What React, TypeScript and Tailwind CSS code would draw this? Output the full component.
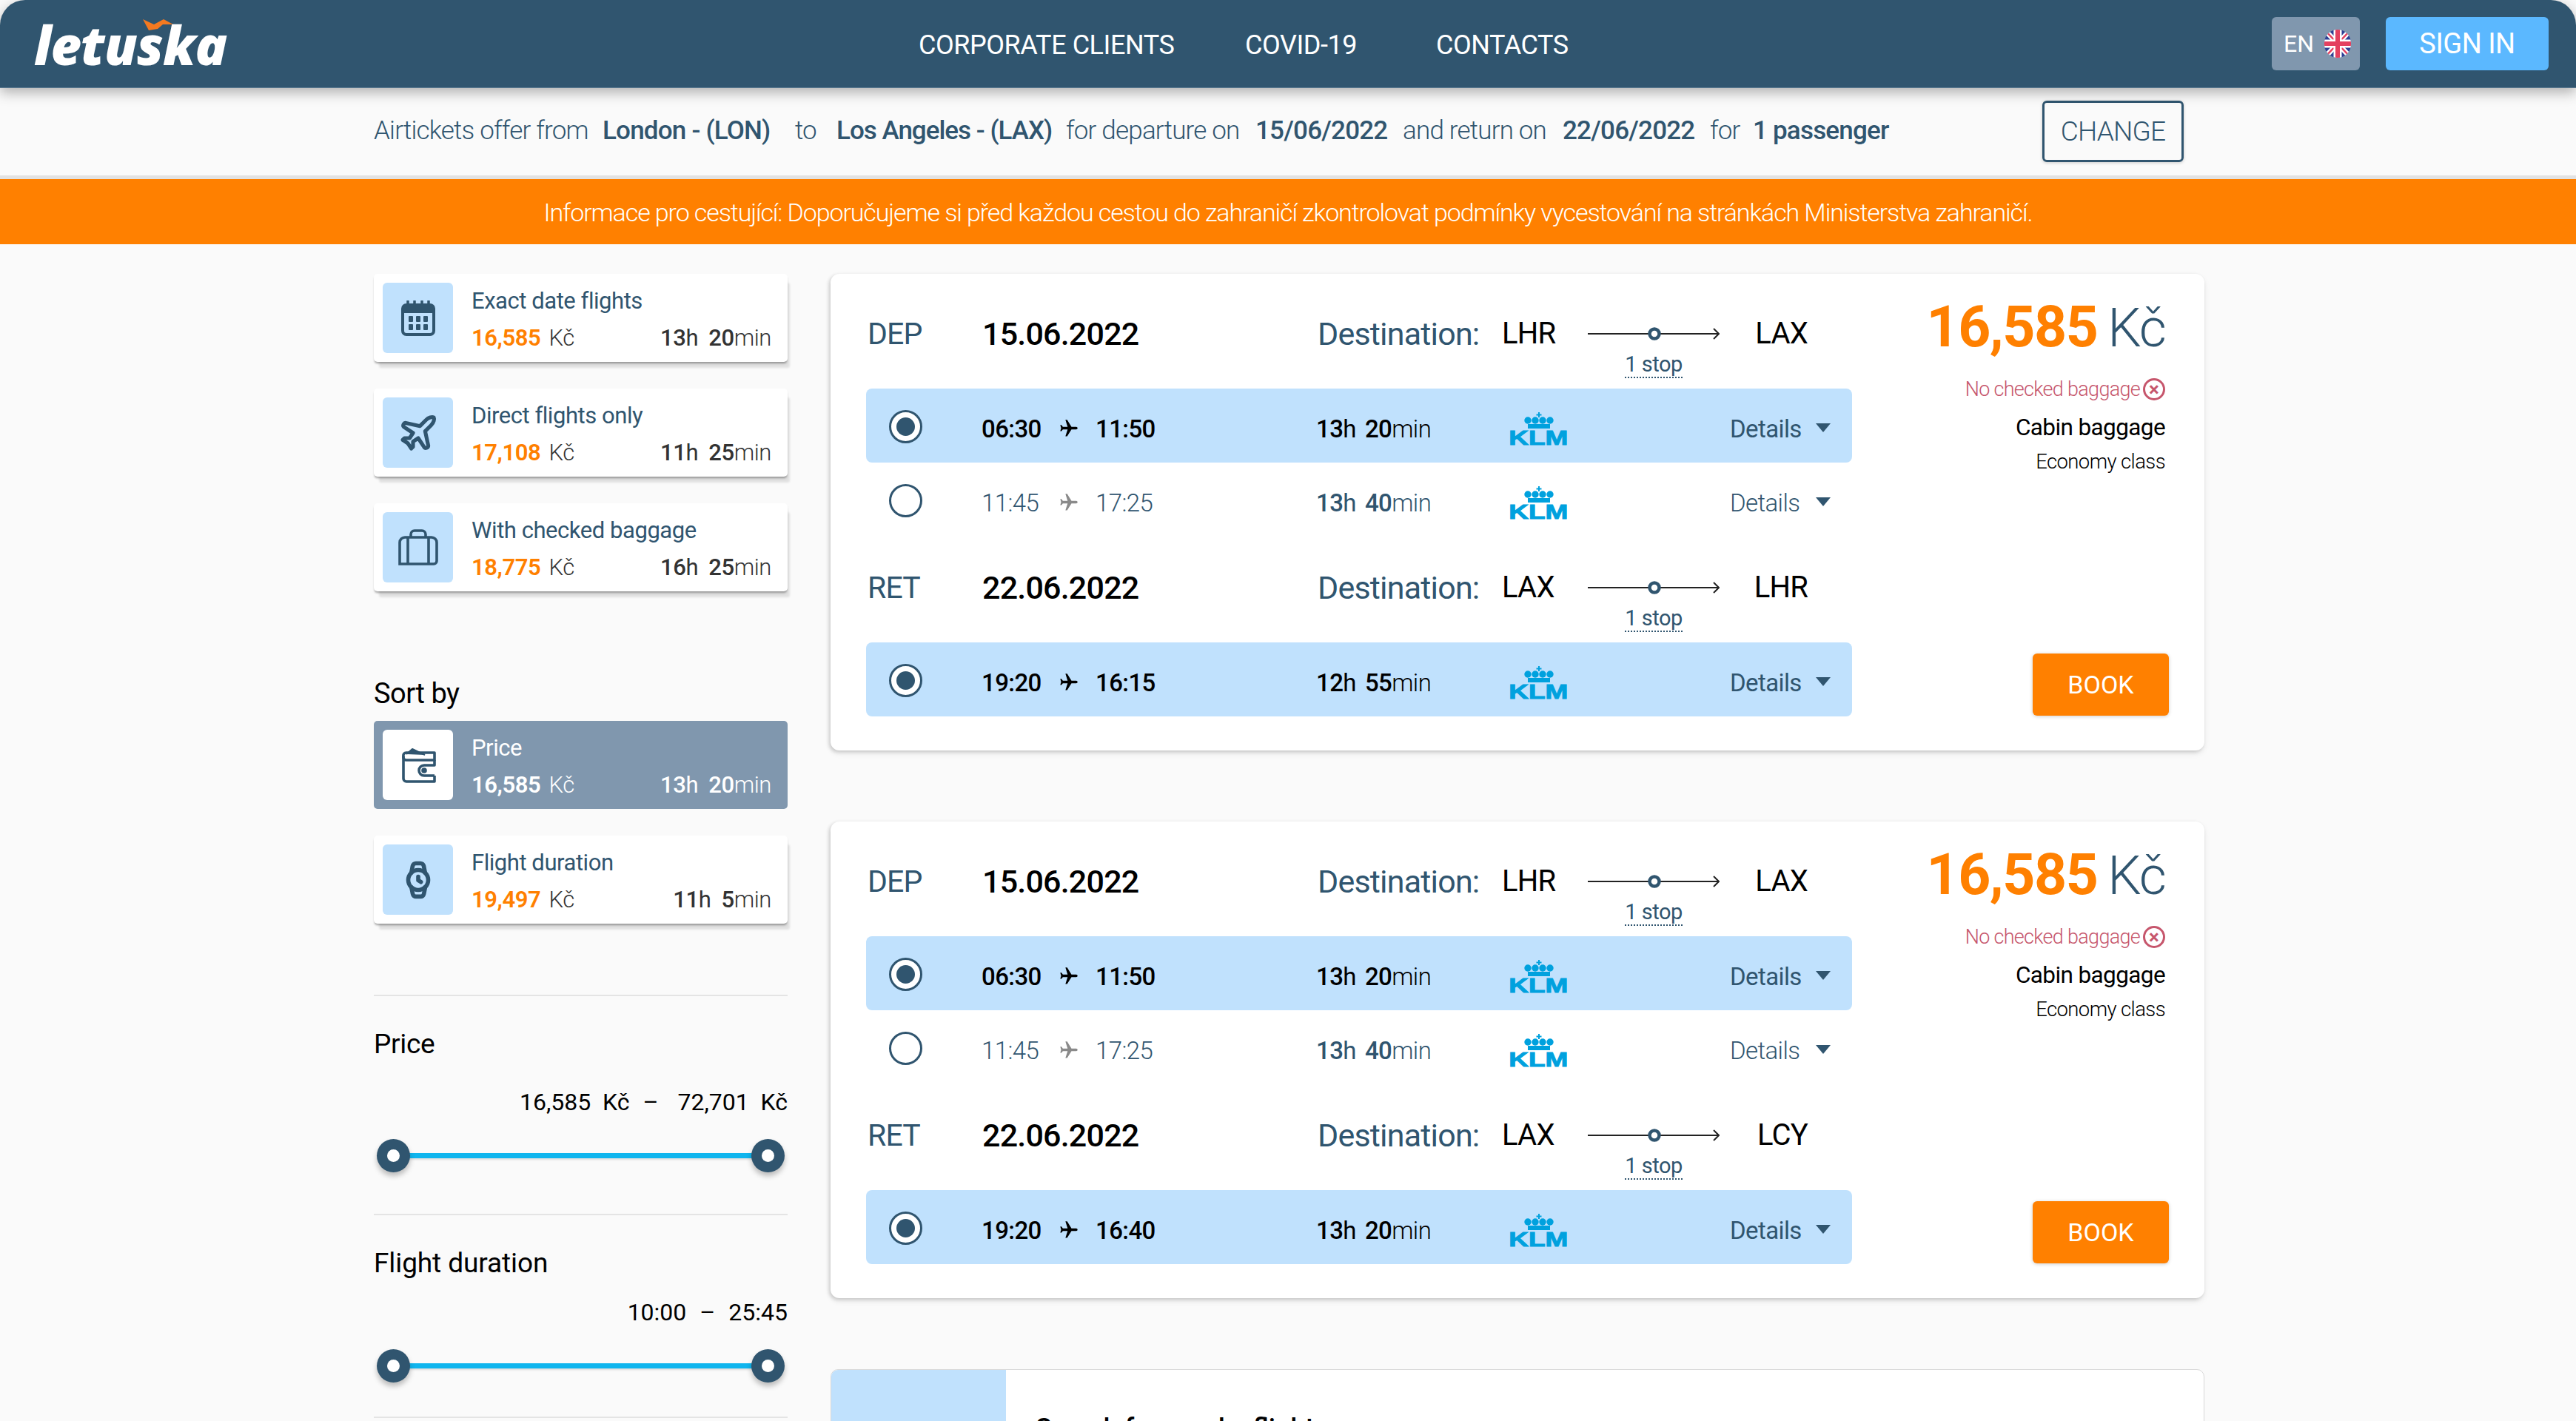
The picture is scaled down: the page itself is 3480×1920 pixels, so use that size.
import React from 'react';
import { Plane, Watch } from 'lucide-react';

interface FlightRowData {
  dep: string;
  arr: string;
  hours: string;
  mins: string;
  selected?: boolean;
}

interface OfferData {
  retTo: string;
  retArr: string;
  retHours: string;
  retMins: string;
}

const CalendarIcon = () => (
  <svg width="46" height="48" viewBox="0 0 46 48" fill="none">
    <rect x="2" y="6" width="42" height="40" rx="5" stroke="#30556f" strokeWidth="4" />
    <rect x="2" y="6" width="42" height="9" fill="#30556f" />
    <path d="M9 1v9M18 1v9M28 1v9M37 1v9" stroke="#30556f" strokeWidth="3.5" strokeLinecap="round" />
    <path d="M2 16h42" stroke="#30556f" strokeWidth="2" />
    <g fill="#30556f">
      <rect x="10" y="21" width="6" height="8" rx="1" />
      <rect x="20" y="21" width="6" height="8" rx="1" />
      <rect x="30" y="21" width="6" height="8" rx="1" />
      <rect x="10" y="32" width="6" height="8" rx="1" />
      <rect x="20" y="32" width="6" height="8" rx="1" />
      <rect x="30" y="32" width="6" height="8" rx="1" />
    </g>
  </svg>
);

const BagIcon = () => (
  <svg width="54" height="50" viewBox="0 0 54 50" fill="none" stroke="#30556f" strokeWidth="3.6">
    <path d="M17 11V7a5 5 0 0 1 5-5h10a5 5 0 0 1 5 5v4" />
    <path d="M2 47V18a7 7 0 0 1 7-7h36a7 7 0 0 1 7 7v25a4 4 0 0 1-4 4z" />
    <path d="M13 11v36M41 11v36" />
  </svg>
);

const WalletIcon = () => (
  <svg width="48" height="48" viewBox="0 0 48 48" fill="none" stroke="#30556f" strokeWidth="3.6" strokeLinejoin="round">
    <path d="M4 12v30a4 4 0 0 0 4 4h38v-8" />
    <path d="M4 12a4 4 0 0 1 4-5h38v10H8a4 4 0 0 1-4-5z" />
    <path d="M8 9 L16 2 L33 10" fill="#30556f" strokeWidth="2" />
    <path d="M46 17v7H32a6 6 0 0 0 0 14h14" />
    <circle cx="32" cy="31" r="2" fill="#30556f" />
  </svg>
);

const TripPlane = ({ color }: { color: string }) => (
  <svg width="28" height="28" viewBox="0 0 24 24" fill={color} className="rotate-90">
    <path d="M21 16v-2l-8-5V3.500c0-.83-.67-1.500-1.500-1.500S10 2.670 10 3.500V9l-8 5v2l8-2.500V19l-2 1.500V22l3.500-1 3.500 1v-1.500L13 19v-5.500l8 2.500z" />
  </svg>
);

const UkFlag = () => (
  <svg width="36" height="38" viewBox="0 0 36 38" className="rounded-full">
    <rect width="36" height="38" fill="#2d3f94" />
    <path d="M0 0L36 38M36 0L0 38" stroke="#fff" strokeWidth="7" />
    <path d="M0 0L36 38M36 0L0 38" stroke="#e4405f" strokeWidth="2.5" />
    <path d="M18 0v38M0 19h36" stroke="#fff" strokeWidth="11" />
    <path d="M18 0v38M0 19h36" stroke="#e4405f" strokeWidth="6" />
  </svg>
);

const KlmLogo = () => (
  <div className="flex w-[81px] flex-col items-center">
    <svg width="40" height="23" viewBox="0 0 40 23" fill="#00a1de">
      <path d="M19 0h2v2.500h2.500v2H21V7h-2V4.500h-2.500v-2H19z" />
      <circle cx="5" cy="11" r="4.700" />
      <circle cx="15" cy="11" r="4.700" />
      <circle cx="25" cy="11" r="4.700" />
      <circle cx="35" cy="11" r="4.700" />
      <rect x="5" y="16" width="30" height="6" />
    </svg>
    <span className="h-[23px] origin-center scale-x-[1.32] [font-family:'Liberation_Sans',sans-serif] text-[28px] leading-[23px] font-bold text-[#00a1de] [-webkit-text-stroke:1px_#00a1de]">
      KLM
    </span>
  </div>
);

const Radio = ({ checked }: { checked?: boolean }) => (
  <span className={`flex h-[45px] w-[45px] items-center justify-center rounded-full border-[3px] border-[#30556f] ${checked ? 'bg-white' : 'bg-transparent'}`}>
    {checked && <span className="h-[25px] w-[25px] rounded-full bg-[#30556f]" />}
  </span>
);

const Caret = () => <span className="mt-[-4px] h-0 w-0 border-x-[10px] border-t-[12px] border-x-transparent border-t-[#30556f]" />;

const FlightRow = ({ dep, arr, hours, mins, selected }: FlightRowData) => (
  <div className={`flex h-[100px] items-center rounded-[8px] pt-[10px] pl-[31px] ${selected ? 'bg-[#c0e1fd]' : ''}`}>
    <div className="w-[125px] -translate-y-[4px]">
      <Radio checked={selected} />
    </div>
    <div className={`flex w-[452px] items-center gap-[22px] text-[33px] tracking-[-0.6px] ${selected ? 'font-medium text-black' : 'font-light text-[#30556f]'}`}>
      <span className="w-[82px]">{dep}</span>
      <span className="-translate-y-[1px]">
        <TripPlane color={selected ? '#000' : '#8a8a8a'} />
      </span>
      <span>{arr}</span>
    </div>
    <div className={`w-[260px] text-[33px] tracking-[-0.6px] ${selected ? 'text-black' : 'text-[#30556f]'}`}>
      <span className="font-medium">{hours}</span>h<span className="ml-[12px] font-medium">{mins}</span>
      <span className="font-light">min</span>
    </div>
    <KlmLogo />
    <div className="ml-[218px] flex items-center gap-[19px] text-[#30556f]">
      <span className={`w-[97px] text-[33px] tracking-[-0.6px] ${selected ? 'font-normal' : 'font-light'}`}>Details</span>
      <Caret />
    </div>
  </div>
);

const RouteHeader = ({ kind, date, from, to }: { kind: string; date: string; from: string; to: string }) => (
  <div className="flex h-[143px] pt-[43px] pl-[2px] text-[40px] leading-[52px] tracking-[-0.8px] text-black">
    <span className="w-[155px] text-[41px] text-[#30556f]">{kind}</span>
    <span className="w-[453px] text-[43px] font-medium">{date}</span>
    <span className="w-[249px] text-[43px] text-[#30556f]">Destination:</span>
    <span className="w-[116px]">{from}</span>
    <div className="flex w-[178px] flex-col items-center">
      <svg width="178" height="50" viewBox="0 0 178 50" fill="none" className="mt-[1px]">
        <path d="M0 25h177M170 18l7 7-7 7" stroke="#222" strokeWidth="2" />
        <circle cx="90" cy="25" r="6.500" fill="#fff" stroke="#30556f" strokeWidth="4.500" />
      </svg>
      <span className="border-b-[2px] border-dotted border-[#30556f] text-[29px] leading-[33px] tracking-[-0.5px] text-[#30556f]">1 stop</span>
    </div>
    <span className="w-[119px] text-right">{to}</span>
  </div>
);

const OfferCard = ({ retTo, retArr, retHours, retMins }: OfferData) => (
  <div className="flex h-[644px] rounded-[12px] bg-white pt-[12px] pl-[48px] shadow-[-2px_2px_5px_rgba(0,0,0,0.16),0_4px_8px_rgba(0,0,0,0.08)]">
    <div className="w-[1332px]">
      <RouteHeader kind="DEP" date="15.06.2022" from="LHR" to="LAX" />
      <FlightRow dep="06:30" arr="11:50" hours="13" mins="20" selected />
      <FlightRow dep="11:45" arr="17:25" hours="13" mins="40" />
      <RouteHeader kind="RET" date="22.06.2022" from="LAX" to={retTo} />
      <FlightRow dep="19:20" arr={retArr} hours={retHours} mins={retMins} selected />
    </div>
    <div className="flex w-[423px] flex-col items-end pt-[22px]">
      <div className="flex items-baseline text-[#30556f]">
        <span className="text-[77px] leading-[76px] font-bold tracking-[-1.5px] text-[#ff8000]">16,585</span>
        <span className="ml-[14px] text-[72px] leading-[76px] font-light tracking-[-2px]">Kč</span>
      </div>
      <div className="mt-[26px] flex items-center gap-[4px] text-[27px] leading-[36px] font-light tracking-[-0.7px] text-[#c6566c]">
        No checked baggage
        <span className="flex h-[30px] w-[30px] items-center justify-center rounded-full border-[3px] border-[#c6566c] text-[26px] leading-none font-bold tracking-normal">×</span>
      </div>
      <div className="mt-[14px] text-[31.5px] leading-[40px] tracking-[-0.6px] text-black">Cabin baggage</div>
      <div className="mt-[8px] text-[27.5px] leading-[36px] font-light tracking-[-0.6px] text-black">Economy class</div>
      <button className="mt-auto mr-[-5px] mb-[47px] h-[84px] w-[184px] rounded-[6px] bg-[#ff8000] text-[34px] font-normal text-white shadow-[0_1px_5px_rgba(0,0,0,0.2)]">BOOK</button>
    </div>
  </div>
);

const SideCard = ({
  title,
  price,
  hours,
  mins,
  icon,
  active,
  mt,
}: {
  title: string;
  price: string;
  hours: string;
  mins: string;
  icon: React.ReactNode;
  active?: boolean;
  mt?: string;
}) => (
  <div
    className={`flex h-[119px] items-center rounded-[5px] pl-[12px] pr-[22px] ${mt ?? ''} ${
      active ? 'bg-[#8097ae] text-white' : 'bg-white shadow-[0_3px_3px_-1px_rgba(0,0,0,0.35),5px_10px_3px_-2px_rgba(0,0,0,0.1)]'
    }`}
  >
    <div className={`flex h-[95px] w-[95px] shrink-0 items-center justify-center rounded-[6px] ${active ? 'bg-white' : 'bg-[#c0e1fd]'}`}>{icon}</div>
    <div className="ml-[25px] flex grow flex-col pt-[5px]">
      <div className={`text-[31px] leading-[50px] tracking-[-0.45px] ${active ? 'text-white' : 'text-[#30556f]'}`}>{title}</div>
      <div className="flex justify-between text-[31px] leading-[50px] tracking-[-0.4px]">
        <span>
          <span className={`font-semibold ${active ? '' : 'text-[#ff8000]'}`}>{price}</span>
          <span className={`ml-[11px] font-light ${active ? '' : 'text-[#333]'}`}>Kč</span>
        </span>
        <span className={active ? '' : 'text-[#333]'}>
          <span className="font-medium">{hours}</span>h<span className="ml-[14px] font-medium">{mins}</span>
          <span className="font-light">min</span>
        </span>
      </div>
    </div>
  </div>
);

const RangeSlider = () => (
  <div className="relative mx-[4px] flex h-[45px] items-center justify-between">
    <span className="absolute inset-x-[20px] top-[19px] h-[7px] bg-[#0fb5ee] shadow-[0_2px_3px_rgba(0,0,0,0.12)]" />
    <span className="relative flex h-[45px] w-[45px] items-center justify-center rounded-full bg-[#30556f] shadow-[0_5px_7px_rgba(0,0,0,0.25)]">
      <span className="h-[17px] w-[17px] rounded-full bg-white" />
    </span>
    <span className="relative flex h-[45px] w-[45px] items-center justify-center rounded-full bg-[#30556f] shadow-[0_5px_7px_rgba(0,0,0,0.25)]">
      <span className="h-[17px] w-[17px] rounded-full bg-white" />
    </span>
  </div>
);

export default function App() {
  return (
    <div className="h-[1920px] overflow-hidden bg-[#fafafa] [font-family:Roboto,sans-serif]">
      {/* top nav */}
      <header className="relative z-10 flex h-[119px] items-center rounded-t-[34px] border-b border-[#5a7a92] bg-[#30556f] shadow-[0_6px_18px_rgba(0,0,0,0.3)]">
        <div className="relative ml-[46px] w-[262px] pt-[2px]">
          <span className="[font-family:'Open_Sans',sans-serif] text-[72px] leading-[80px] font-extrabold tracking-[-1px] text-white italic">letuska</span>
          <svg width="41" height="15" viewBox="0 0 41 15" className="absolute top-[8px] left-[147px]" fill="#f47920">
            <path d="M0 0L15 7L28 0L41 7H27L20 13L8 15z" />
          </svg>
        </div>
        <nav className="ml-[933px] flex pt-[3px] text-[36px] tracking-[-0.45px] text-white">
          <span className="w-[441px]">CORPORATE CLIENTS</span>
          <span className="w-[258px]">COVID-19</span>
          <span>CONTACTS</span>
        </nav>
        <div className="ml-auto mr-[37px] flex gap-[35px]">
          <button className="flex h-[72px] w-[119px] items-center justify-between rounded-[6px] bg-[#8097ae] pr-[12px] pl-[16px] text-[32px] text-white">
            EN
            <UkFlag />
          </button>
          <button className="h-[72px] w-[220px] rounded-[6px] bg-[#5bb8ff] text-[38px] tracking-[-0.5px] text-white">SIGN IN</button>
        </div>
      </header>

      {/* search summary */}
      <div className="h-[123px] border-b-[5px] border-[#e2e2e2] bg-[#fafafa] pt-[16px]">
        <div className="mx-auto flex w-[2446px] -translate-x-[12px] items-center text-[35px] font-light tracking-[-0.8px] text-[#30556f]">
          <span className="w-[309px]">Airtickets offer from</span>
          <span className="w-[260px] font-medium">London - (LON)</span>
          <span className="w-[56px]">to</span>
          <span className="w-[310px] font-medium tracking-[-1px]">Los Angeles - (LAX)</span>
          <span className="w-[256px]">for departure on</span>
          <span className="w-[199px] font-medium">15/06/2022</span>
          <span className="w-[216px]">and return on</span>
          <span className="w-[199px] font-medium">22/06/2022</span>
          <span className="w-[58px]">for</span>
          <span className="w-[391px] font-medium">1 passenger</span>
          <button className="mt-[1px] h-[83px] w-[191px] rounded-[6px] border-[3px] border-[#30556f] text-[37px] tracking-[-0.8px] shadow-[0_1px_4px_rgba(0,0,0,0.2)]">CHANGE</button>
        </div>
      </div>

      {/* notice */}
      <div className="h-[88px] bg-[#ff8000] text-center text-[34px] leading-[90px] font-light tracking-[-1.1px] text-white">
        Informace pro cestující: Doporučujeme si před každou cestou do zahraničí zkontrolovat podmínky vycestování na stránkách Ministerstva zahraničí.
      </div>

      <main className="ml-[505px] flex w-[2473px] gap-[58px] pt-[40px]">
        <aside className="w-[559px] shrink-0">
          <SideCard title="Exact date flights" price="16,585" hours="13" mins="20" icon={<CalendarIcon />} />
          <SideCard mt="mt-[36px]" title="Direct flights only" price="17,108" hours="11" mins="25" icon={<Plane size={56} color="#30556f" strokeWidth={2.2} />} />
          <SideCard mt="mt-[36px]" title="With checked baggage" price="18,775" hours="16" mins="25" icon={<BagIcon />} />
          <h3 className="mt-[114px] text-[38px] leading-[48px] tracking-[-0.5px] text-black">Sort by</h3>
          <SideCard mt="mt-[13px]" active title="Price" price="16,585" hours="13" mins="20" icon={<WalletIcon />} />
          <SideCard mt="mt-[36px]" title="Flight duration" price="19,497" hours="11" mins="5" icon={<Watch size={54} color="#30556f" strokeWidth={2.5} />} />

          <div className="mt-[96px] border-t-[2px] border-[#e4e4e4]" />
          <h3 className="mt-[41px] text-[37px] leading-[48px] tracking-[-0.3px] text-black">Price</h3>
          <div className="mt-[34px] flex justify-end gap-[18px] text-[32px] leading-[40px] text-black">
            <span>16,585 &nbsp;Kč</span>
            <span>–</span>
            <span className="ml-[8px]">72,701 &nbsp;Kč</span>
          </div>
          <div className="mt-[30px]">
            <RangeSlider />
          </div>
          <div className="mt-[56px] border-t-[2px] border-[#e4e4e4]" />
          <h3 className="mt-[41px] text-[37px] leading-[48px] tracking-[-0.1px] text-black">Flight duration</h3>
          <div className="mt-[22px] flex justify-end gap-[18px] text-[32px] leading-[40px] text-black">
            <span>10:00</span>
            <span>–</span>
            <span>25:45</span>
          </div>
          <div className="mt-[30px]">
            <RangeSlider />
          </div>
          <div className="mt-[46px] border-t-[2px] border-[#e4e4e4]" />
        </aside>

        <section className="w-[1856px]">
          <OfferCard retTo="LHR" retArr="16:15" retHours="12" retMins="55" />
          <div className="mt-[96px]">
            <OfferCard retTo="LCY" retArr="16:40" retHours="13" retMins="20" />
          </div>
          <div className="mt-[96px] flex h-[200px] overflow-hidden rounded-t-[10px] border border-[#d8d8d8] bg-white">
            <div className="w-[236px] bg-[#c0e1fd]" />
            <div className="ml-[40px] pt-[52px] text-[36px] font-medium text-black">Search for nearby flights</div>
          </div>
        </section>
      </main>
    </div>
  );
}
